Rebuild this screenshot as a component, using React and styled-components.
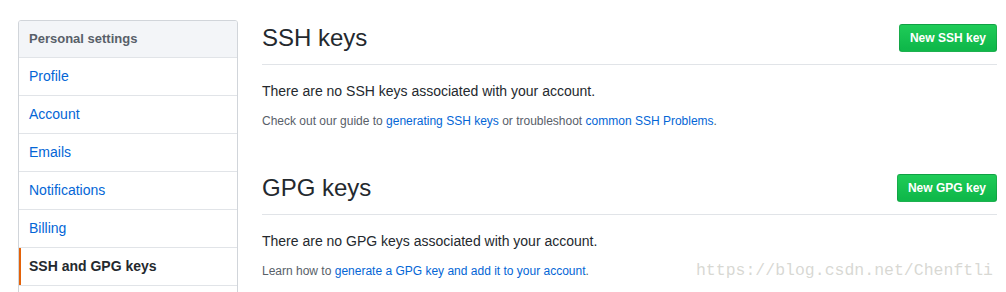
import styled, { createGlobalStyle, css } from 'styled-components';

const GlobalStyle = createGlobalStyle`
  html, body {
    margin: 0;
    padding: 0;
    background: #fff;
  }
  body {
    font-family: "Liberation Sans", Arial, Helvetica, sans-serif;
    font-size: 14px;
    line-height: 1.5;
    color: #24292e;
    overflow: hidden;
  }
  * {
    box-sizing: border-box;
  }
`;

const Page = styled.div`
  position: relative;
  display: flex;
  align-items: flex-start;
  height: 292px;
  overflow: hidden;
  padding: 20px 9px 0 18px;
`;

const Menu = styled.nav`
  flex: 0 0 220px;
  border: 1px solid #d1d5da;
  border-radius: 3px;
  overflow: hidden;
`;

const MenuHeading = styled.h3`
  margin: 0;
  padding: 8px 10px;
  font-size: 13px;
  font-weight: 700;
  line-height: 20px;
  color: #586069;
  background-color: #f3f5f8;
  border-bottom: 1px solid #e1e4e8;
`;

const MenuItem = styled.a`
  position: relative;
  display: block;
  padding: 8px 10px;
  color: #0366d6;
  text-decoration: none;
  border-bottom: 1px solid #e1e4e8;

  ${p => p.$selected && css`
    font-weight: 700;
    color: #24292e;

    &::before {
      content: "";
      position: absolute;
      top: 0;
      bottom: 0;
      left: 0;
      width: 2px;
      background-color: #e36209;
    }
  `}
`;

const Main = styled.main`
  flex: 1;
  margin-left: 24px;
`;

const Section = styled.section`
  margin-top: ${p => p.$gap || 0}px;
`;

const Subhead = styled.div`
  display: flex;
  align-items: center;
  justify-content: space-between;
  padding-bottom: 8px;
  margin-bottom: 16px;
  border-bottom: 1px solid #e1e4e8;
`;

const Heading = styled.h2`
  margin: 0;
  font-size: 24px;
  font-weight: 400;
  line-height: 36px;
  color: #24292e;
`;

const PrimaryButton = styled.button`
  padding: 3px 10px;
  font-family: inherit;
  font-size: 12px;
  font-weight: 700;
  line-height: 20px;
  color: #fff;
  background-color: #14c24f;
  background-image: linear-gradient(-180deg, #1fcc58 0%, #0fb84a 90%);
  border: 1px solid rgba(27, 31, 35, 0.15);
  border-radius: 3px;
  cursor: pointer;
`;

const Blurb = styled.p`
  margin: 0 0 10px;
  font-size: 14px;
  line-height: 21px;
`;

const Note = styled.p`
  margin: 0;
  font-size: 12px;
  line-height: 18px;
  color: #586069;
`;

const Link = styled.a`
  color: #0366d6;
  text-decoration: none;
`;

const Watermark = styled.div`
  position: absolute;
  right: 13px;
  bottom: 11px;
  font-family: "Liberation Mono", "DejaVu Sans Mono", monospace;
  font-size: 16.5px;
  line-height: 20px;
  color: rgba(190, 190, 182, 0.6);
  pointer-events: none;
`;

const menuItems = [
  'Profile',
  'Account',
  'Emails',
  'Notifications',
  'Billing',
  'SSH and GPG keys',
  'Security',
];

export default function App() {
  return (
    <>
      <GlobalStyle />
      <Page>
        <Menu>
          <MenuHeading>Personal settings</MenuHeading>
          {menuItems.map(item => (
            <MenuItem key={item} href="#" $selected={item === 'SSH and GPG keys'}>
              {item}
            </MenuItem>
          ))}
        </Menu>
        <Main>
          <Section>
            <Subhead>
              <Heading>SSH keys</Heading>
              <PrimaryButton>New SSH key</PrimaryButton>
            </Subhead>
            <Blurb>There are no SSH keys associated with your account.</Blurb>
            <Note>
              Check out our guide to <Link href="#">generating SSH keys</Link> or troubleshoot{' '}
              <Link href="#">common SSH Problems</Link>.
            </Note>
          </Section>
          <Section $gap={40}>
            <Subhead>
              <Heading>GPG keys</Heading>
              <PrimaryButton>New GPG key</PrimaryButton>
            </Subhead>
            <Blurb>There are no GPG keys associated with your account.</Blurb>
            <Note>
              Learn how to <Link href="#">generate a GPG key and add it to your account</Link>.
            </Note>
          </Section>
        </Main>
        <Watermark>https://blog.csdn.net/Chenftli</Watermark>
      </Page>
    </>
  );
}
